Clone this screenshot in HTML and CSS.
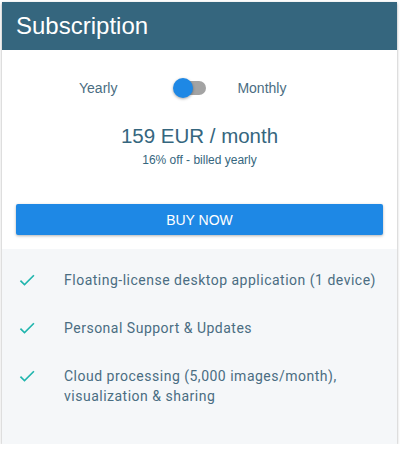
FILE: index.html
```html
<!DOCTYPE html>
<html>
<head>
<meta charset="utf-8">
<link rel="stylesheet" href="styles.css">
</head>
<body>
<div class="card">
  <div class="header">Subscription</div>
  <div class="top">
    <div class="toggle-row">
      <span class="label">Yearly</span>
      <span class="switch"><span class="track"></span><span class="thumb"></span></span>
      <span class="label">Monthly</span>
    </div>
    <div class="price">159 EUR / month</div>
    <div class="note">16% off - billed yearly</div>
    <button class="buy">BUY NOW</button>
  </div>
  <ul class="features">
    <li><svg class="check" viewBox="0 0 24 24" width="20" height="20"><path d="M9 16.17L4.83 12l-1.42 1.41L9 19 21 7l-1.41-1.41z" fill="#1fb5ad"/></svg><span>Floating-license desktop application (1 device)</span></li>
    <li><svg class="check" viewBox="0 0 24 24" width="20" height="20"><path d="M9 16.17L4.83 12l-1.42 1.41L9 19 21 7l-1.41-1.41z" fill="#1fb5ad"/></svg><span>Personal Support &amp; Updates</span></li>
    <li><svg class="check" viewBox="0 0 24 24" width="20" height="20"><path d="M9 16.17L4.83 12l-1.42 1.41L9 19 21 7l-1.41-1.41z" fill="#1fb5ad"/></svg><span>Cloud processing (5,000 images/month), visualization &amp; sharing</span></li>
  </ul>
</div>
</body>
</html>
```
FILE: styles.css
```css
* { box-sizing: border-box; }
body {
  margin: 0;
  padding: 2px 4px 0 2px;
  background: #fff;
  font-family: "Liberation Sans", Arial, sans-serif;
}
.card {
  width: 395px;
  height: 442px;
  background: #fff;
  box-shadow: 0 1px 3px rgba(0,0,0,0.25), 0 2px 2px rgba(0,0,0,0.12);
  display: flex;
  flex-direction: column;
}
.header {
  height: 48px;
  background: #35667e;
  color: #fff;
  font-size: 24px;
  padding: 0 14px;
  display: flex;
  align-items: center;
}
.top {
  padding: 26px 14px 14px;
  display: flex;
  flex-direction: column;
  align-items: center;
}
.toggle-row {
  align-self: flex-start;
  margin-left: 63px;
  display: flex;
  align-items: center;
  height: 24px;
}
.label {
  color: #4a6d82;
  font-size: 14px;
}
.switch {
  position: relative;
  width: 33px;
  height: 20px;
  margin: 0 31px 0 56px;
}
.track {
  position: absolute;
  left: 2px;
  right: 0;
  top: 3px;
  height: 14px;
  border-radius: 7px;
  background: #a3a3a3;
}
.thumb {
  position: absolute;
  left: 0;
  top: 0;
  width: 20px;
  height: 20px;
  border-radius: 50%;
  background: #1e88e5;
  box-shadow: 0 1px 3px rgba(0,0,0,0.35);
}
.price {
  margin-top: 24px;
  font-size: 20.5px;
  color: #35667e;
}
.note {
  margin-top: 5px;
  font-size: 12px;
  color: #35667e;
}
.buy {
  margin-top: 37px;
  width: 100%;
  height: 31px;
  border: 0;
  border-radius: 2px;
  background: #1e88e5;
  color: #fff;
  font-family: "Liberation Sans", Arial, sans-serif;
  font-size: 14px;
  box-shadow: 0 1px 3px rgba(0,0,0,0.3);
}
.features {
  flex: 1;
  margin: 0;
  padding: 21px 14px 0 15px;
  list-style: none;
  background: #f5f7f9;
}
.features li {
  display: flex;
  align-items: flex-start;
  margin-bottom: 28px;
}
.check {
  flex: none;
  margin-top: 0;
  margin-right: 27px;
}
.features span {
  font-family: Roboto, "Liberation Sans", sans-serif;
  color: #4a6d82;
  font-size: 14px;
  letter-spacing: 0.5px;
  line-height: 20px;
}
```
